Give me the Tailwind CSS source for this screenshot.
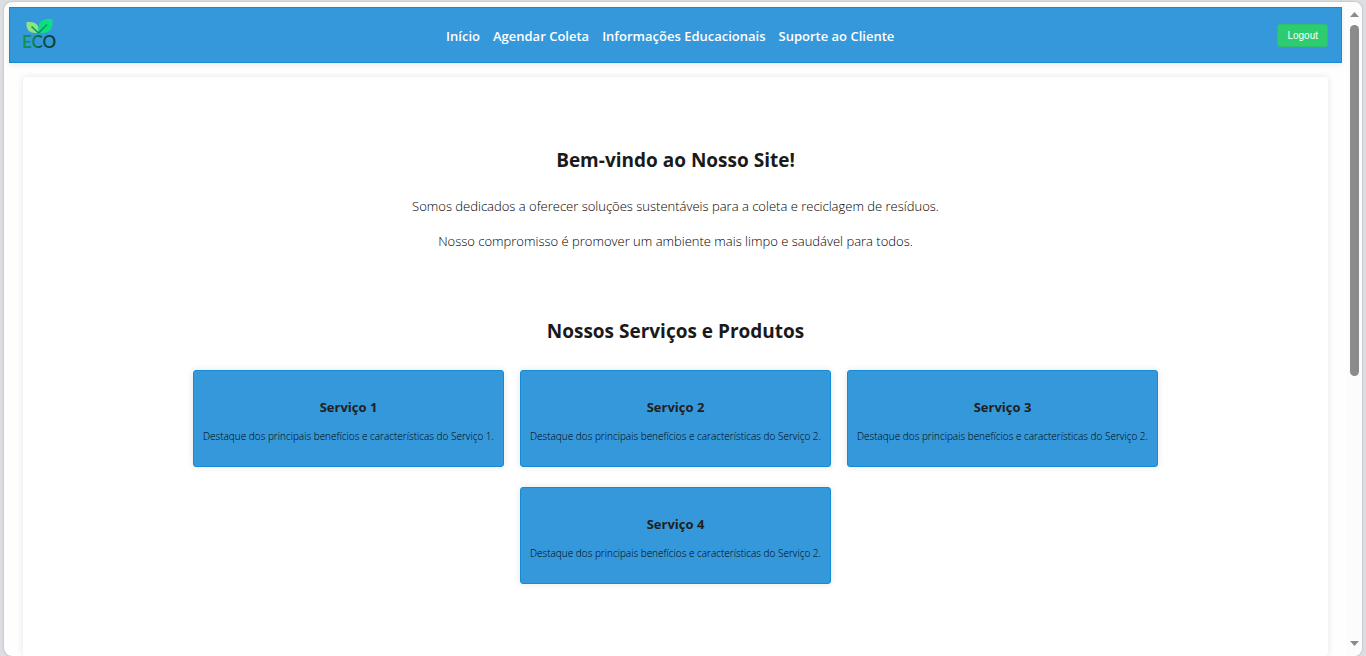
<!DOCTYPE html>
<html lang="pt-BR">
<head>
<meta charset="utf-8">
<meta name="viewport" content="width=device-width, initial-scale=1">
<title>Eco</title>
<script src="https://cdn.jsdelivr.net/npm/@tailwindcss/browser@4"></script>
</head>
<body class="h-screen overflow-hidden bg-[#dddee2] px-1 pt-0.5 font-['Open_Sans','Noto_Sans',sans-serif] text-[#1a1a1a]">
<div class="flex h-full overflow-hidden rounded-lg bg-[#fefefe] shadow-[0_0_2px_rgba(0,0,0,0.3)]">
  <div class="flex min-w-0 flex-1 flex-col pt-[5px] pr-[5px] pl-[5px]">
    <header class="flex h-14 shrink-0 items-center justify-between border border-[#148bd7] bg-[#3598db] px-[13px] shadow-[0_2px_6px_rgba(0,0,0,0.08)]">
      <a href="#" aria-label="Eco">
        <svg class="block h-[34px] w-10" viewBox="0 0 40 34">
          <defs>
            <linearGradient id="eco" x1="0" x2="1"><stop offset="0" stop-color="#0a9a3c"/><stop offset=".3" stop-color="#0a8a5c"/><stop offset=".6" stop-color="#07503f"/><stop offset="1" stop-color="#063a2c"/></linearGradient>
          </defs>
          <path d="M3.500 4h3.500c5.500 0 8.500 3 8.500 7v4h-3c-5.500 0-9-3-9-8z" fill="#8de57f"/>
          <path d="M29.500 1v4c0 6.500-4 10-9 10h-5v-4c0-6.500 3.500-10 9-10z" fill="#0be07e"/>
          <path d="M8.500 8.500l7 6.500M15.500 15l8.500-8.500" fill="none" stroke="#07945f" stroke-width="1.600"/>
          <text x="-1" y="30" font-family="Lato, sans-serif" font-size="17" font-weight="600" fill="url(#eco)">ECO</text>
        </svg>
      </a>
      <nav class="flex gap-[13px] pt-0.5 text-[13px] leading-5 font-[650] whitespace-nowrap text-white">
        <a href="#">Início</a>
        <a href="#">Agendar Coleta</a>
        <a href="#">Informações Educacionais</a>
        <a href="#">Suporte ao Cliente</a>
      </nav>
      <button class="h-[23px] rounded-[3px] border border-[#2fbf71] bg-[#2ecc71] px-[9px] font-['Liberation_Sans',Arial,sans-serif] text-[10px] text-white">Logout</button>
    </header>
    <main class="mx-3.5 mt-3.5 min-h-0 flex-1 rounded-[4px] bg-white px-4 pt-[69px] text-center shadow-[0_0_7px_rgba(0,0,0,0.1)]">
      <section>
        <h1 class="text-[19px] leading-7 font-bold">Bem-vindo ao Nosso Site!</h1>
        <p class="mt-[21px] text-[13px] leading-[22px] font-light text-black">Somos dedicados a oferecer soluções sustentáveis para a coleta e reciclagem de resíduos.</p>
        <p class="mt-[13px] text-[13px] leading-[22px] font-light text-black">Nosso compromisso é promover um ambiente mais limpo e saudável para todos.</p>
      </section>
      <section class="mt-[65px]">
        <h2 class="text-[19px] leading-7 font-bold">Nossos Serviços e Produtos</h2>
        <div class="mx-auto mt-[25px] flex max-w-[1000px] flex-wrap justify-center gap-x-4 gap-y-5">
          <article class="w-[311px] rounded-[3px] border border-[#148bd7] bg-[#3598db] pt-[26px] pb-5 shadow-[0_0_7px_rgba(0,0,0,0.1)]">
            <h3 class="text-[13px] leading-5 font-bold text-[#22201c]">Serviço 1</h3>
            <p class="mt-2.5 text-[10px] leading-[19px] font-light whitespace-nowrap text-black">Destaque dos principais benefícios e características do Serviço 1.</p>
          </article>
          <article class="w-[311px] rounded-[3px] border border-[#148bd7] bg-[#3598db] pt-[26px] pb-5 shadow-[0_0_7px_rgba(0,0,0,0.1)]">
            <h3 class="text-[13px] leading-5 font-bold text-[#22201c]">Serviço 2</h3>
            <p class="mt-2.5 text-[10px] leading-[19px] font-light whitespace-nowrap text-black">Destaque dos principais benefícios e características do Serviço 2.</p>
          </article>
          <article class="w-[311px] rounded-[3px] border border-[#148bd7] bg-[#3598db] pt-[26px] pb-5 shadow-[0_0_7px_rgba(0,0,0,0.1)]">
            <h3 class="text-[13px] leading-5 font-bold text-[#22201c]">Serviço 3</h3>
            <p class="mt-2.5 text-[10px] leading-[19px] font-light whitespace-nowrap text-black">Destaque dos principais benefícios e características do Serviço 2.</p>
          </article>
          <article class="w-[311px] rounded-[3px] border border-[#148bd7] bg-[#3598db] pt-[26px] pb-5 shadow-[0_0_7px_rgba(0,0,0,0.1)]">
            <h3 class="text-[13px] leading-5 font-bold text-[#22201c]">Serviço 4</h3>
            <p class="mt-2.5 text-[10px] leading-[19px] font-light whitespace-nowrap text-black">Destaque dos principais benefícios e características do Serviço 2.</p>
          </article>
        </div>
      </section>
    </main>
  </div>
  <div class="flex w-[15px] shrink-0 flex-col items-center bg-[#fcfcfc] pt-2.5 pb-2.5" aria-hidden="true">
    <svg class="h-[5px] w-[9px]" viewBox="0 0 9 5"><path d="M0 5L4.500 0L9 5z" fill="#8b8b8b"/></svg>
    <div class="mt-2 min-h-0 flex-1">
      <div class="h-[57%] w-[9px] rounded-full bg-[#8b8b8b]"></div>
    </div>
    <svg class="h-[5px] w-[9px]" viewBox="0 0 9 5"><path d="M0 0L4.500 5L9 0z" fill="#8b8b8b"/></svg>
  </div>
</div>
</body>
</html>
